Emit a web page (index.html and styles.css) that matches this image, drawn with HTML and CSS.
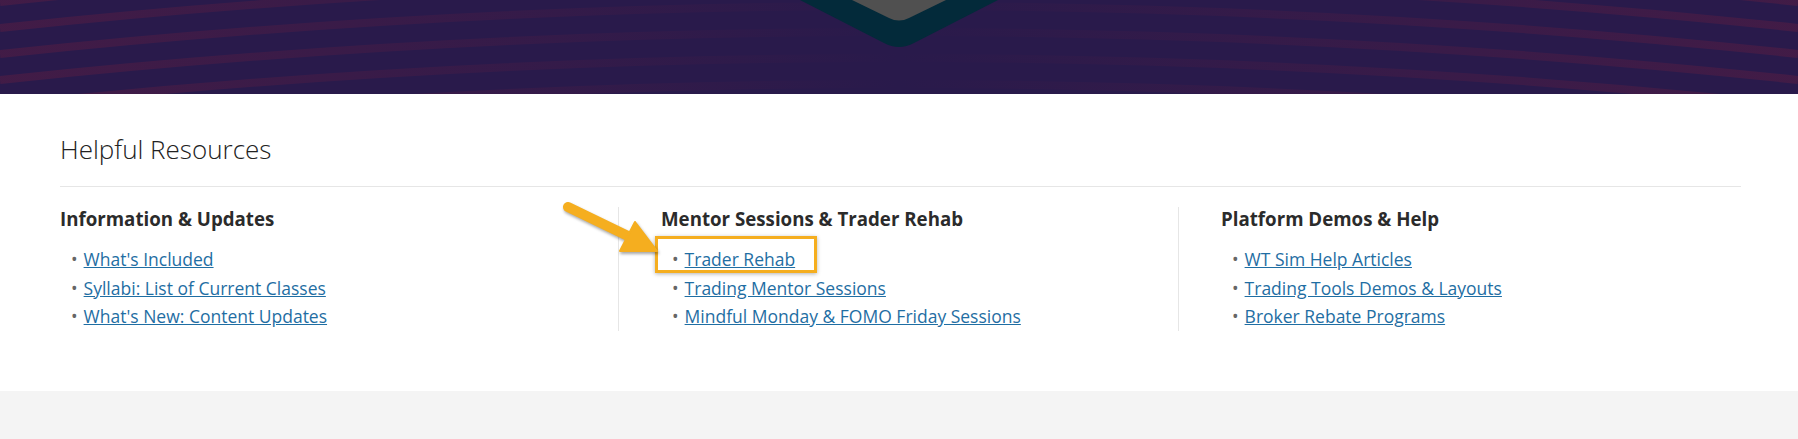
FILE: index.html
```html
<!DOCTYPE html>
<html>
<head>
    <title>Helpful Resources</title>
    <link rel="stylesheet" href="styles.css">
</head>
<body>
    <!-- Hero banner (bottom strip only) -->
    <header class="hero">
        <svg class="hero-art" viewBox="0 0 1798 94" preserveAspectRatio="xMidYMin slice">
            <defs>
                <linearGradient id="stripeFade" gradientUnits="userSpaceOnUse" x1="0" y1="0" x2="1798" y2="0">
                    <stop offset="0" stop-color="#4a1c45" stop-opacity="0.75"/>
                    <stop offset="0.3" stop-color="#4a1c45" stop-opacity="0.35"/>
                    <stop offset="0.5" stop-color="#4a1c45" stop-opacity="0"/>
                    <stop offset="0.7" stop-color="#4a1c45" stop-opacity="0.35"/>
                    <stop offset="1" stop-color="#4a1c45" stop-opacity="0.75"/>
                </linearGradient>
            </defs>
            <g fill="none" stroke="url(#stripeFade)" stroke-width="8">
                <path d="M0 -24 Q899 -120 1798 -24"/>
                <path d="M0 2 Q899 -94 1798 2"/>
                <path d="M0 28 Q899 -68 1798 28"/>
                <path d="M0 54 Q899 -42 1798 54"/>
                <path d="M0 80 Q899 -16 1798 80"/>
                <path d="M0 106 Q899 10 1798 106"/>
                <path d="M0 132 Q899 36 1798 132"/>
            </g>
            <!-- bottom tip of the logo badge -->
            <path d="M800 0 L884 43 Q899 51 914 43 L998 0 Z" fill="#032a3a"/>
            <path d="M852 0 L889 18 Q899 23 909 18 L946 0 Z" fill="#505050"/>
        </svg>
    </header>

    <!-- Resources section -->
    <section class="resources">
        <h2 class="resources-title">Helpful Resources</h2>

        <div class="resources-grid">
            <div class="resource-col">
                <h3>Information &amp; Updates</h3>
                <ul class="resource-list">
                    <li><a href="#">What's Included</a></li>
                    <li><a href="#">Syllabi: List of Current Classes</a></li>
                    <li><a href="#">What's New: Content Updates</a></li>
                </ul>
            </div>

            <div class="resource-col">
                <h3>Mentor Sessions &amp; Trader Rehab</h3>
                <ul class="resource-list">
                    <li><a href="#">Trader Rehab</a></li>
                    <li><a href="#">Trading Mentor Sessions</a></li>
                    <li><a href="#">Mindful Monday &amp; FOMO Friday Sessions</a></li>
                </ul>
                <!-- highlight box drawn over the first link -->
                <div class="callout-box"></div>
            </div>

            <div class="resource-col">
                <h3>Platform Demos &amp; Help</h3>
                <ul class="resource-list">
                    <li><a href="#">WT Sim Help Articles</a></li>
                    <li><a href="#">Trading Tools Demos &amp; Layouts</a></li>
                    <li><a href="#">Broker Rebate Programs</a></li>
                </ul>
            </div>
        </div>

        <!-- pointer arrow -->
        <svg class="callout-arrow" viewBox="0 0 120 70" width="120" height="70">
            <line x1="18" y1="12" x2="80" y2="42" stroke="#f5ae1f" stroke-width="10" stroke-linecap="round"/>
            <path d="M85 27 L107 56 L70 56 Z" fill="#f5ae1f" stroke="#f5ae1f" stroke-width="2" stroke-linejoin="round"/>
        </svg>
    </section>

    <footer class="page-footer"></footer>
</body>
</html>
```

FILE: styles.css
```css
/* Base page */
body {
    margin: 0;
    font-family: "Open Sans", Arial, sans-serif;
    color: #333;
    background-color: #fff;
}

/* Banner strip at the top */
.hero {
    height: 94px;
    background-color: #291a4b;
    overflow: hidden;
}

.hero-art {
    display: block;
    width: 100%;
    height: 94px;
}

/* Resources block */
.resources {
    position: relative;
    padding: 38px 57px 60px 60px;
}

.resources-title {
    margin: 0;
    padding-bottom: 20px;
    border-bottom: 1px solid #e6e6e6;
    font-size: 26px;
    font-weight: 300;
    line-height: 34px;
    color: #222;
}

.resources-grid {
    display: grid;
    grid-template-columns: 558px 560px 1fr;
    margin-top: 20px;
}

.resource-col {
    position: relative;
}

.resource-col + .resource-col {
    border-left: 1px solid #e6e6e6;
    padding-left: 42px;
}

.resource-col h3 {
    margin: 0;
    font-size: 18.7px;
    font-weight: 700;
    line-height: 24px;
    color: #2b2b2b;
}

/* Link lists */
.resource-list {
    list-style: none;
    margin: 14px 0 0;
    padding: 0 0 0 11px;
}

.resource-list li {
    font-size: 17.5px;
    line-height: 28.5px;
}

.resource-list li::before {
    content: "\2022";
    color: #666;
    margin-right: 6px;
}

.resource-list a {
    color: #1f6ea3;
    text-decoration: underline;
}

/* Annotation overlays */
.callout-box {
    position: absolute;
    left: 36px;
    top: 29px;
    width: 162px;
    height: 37px;
    box-sizing: border-box;
    border: 3px solid #f5ae1f;
    box-shadow: 0 1px 4px rgba(0, 0, 0, 0.3);
}

.callout-arrow {
    position: absolute;
    left: 550px;
    top: 101px;
    filter: drop-shadow(1px 2px 1.5px rgba(0, 0, 0, 0.35));
}

/* Grey strip below */
.page-footer {
    height: 48px;
    background-color: #f4f4f4;
}
```
